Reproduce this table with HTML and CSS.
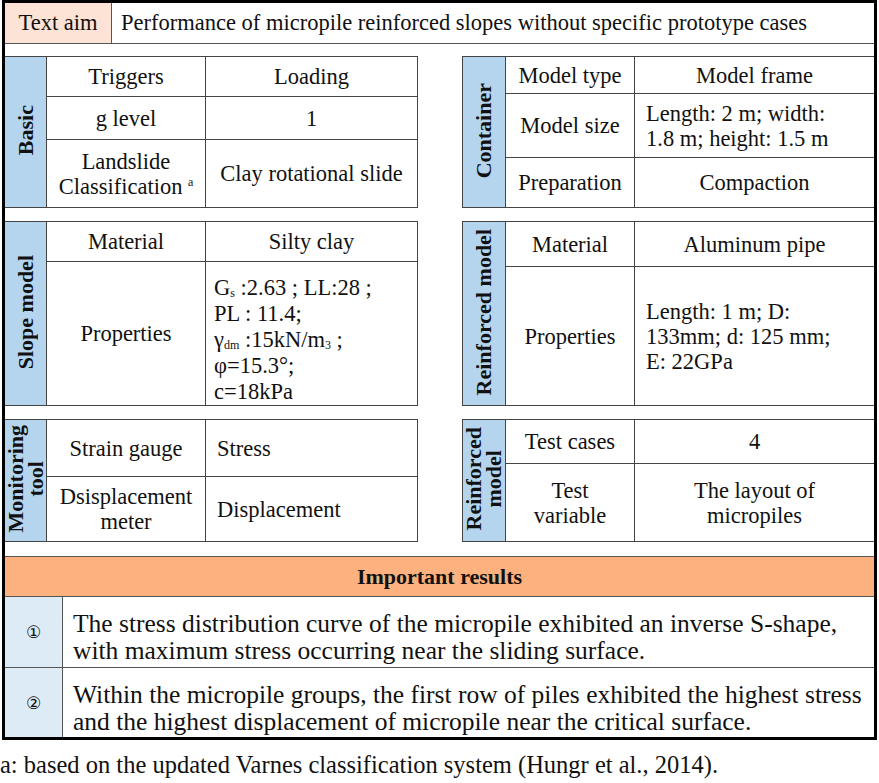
FILE: index.html
```html
<!DOCTYPE html>
<html lang="en">
<head>
    <meta charset="UTF-8">
    <meta name="viewport" content="width=device-width, initial-scale=1.0">
    <title>Micropile reinforced slopes</title>
    <link rel="stylesheet" href="styles.css">
</head>
<body>

    <div class="frame">
        <!-- Text aim -->
        <div class="aim">
            <div class="aim-label">Text aim</div>
            <div class="aim-text">Performance of micropile reinforced slopes without specific prototype cases</div>
        </div>

        <!-- Basic / Container -->
        <div class="pair pair-a">
            <table class="info left">
                <tr class="h40">
                    <td class="side" rowspan="3"><span>Basic</span></td>
                    <td class="key">Triggers</td>
                    <td>Loading</td>
                </tr>
                <tr class="h43">
                    <td class="key">g level</td>
                    <td>1</td>
                </tr>
                <tr class="h68">
                    <td class="key">Landslide<br>Classification <sup>a</sup></td>
                    <td>Clay rotational slide</td>
                </tr>
            </table>
            <table class="info right">
                <tr class="h37">
                    <td class="side" rowspan="3"><span>Container</span></td>
                    <td class="key">Model type</td>
                    <td>Model frame</td>
                </tr>
                <tr class="h64">
                    <td class="key">Model size</td>
                    <td class="text">Length: 2 m; width:<br>1.8 m; height: 1.5 m</td>
                </tr>
                <tr class="h50">
                    <td class="key">Preparation</td>
                    <td>Compaction</td>
                </tr>
            </table>
        </div>

        <!-- Slope model / Reinforced model -->
        <div class="pair pair-b">
            <table class="info left">
                <tr class="h40">
                    <td class="side" rowspan="2"><span>Slope model</span></td>
                    <td class="key">Material</td>
                    <td>Silty clay</td>
                </tr>
                <tr class="h144">
                    <td class="key">Properties</td>
                    <td class="text props">G<sub>s</sub> :2.63 ; LL:28 ;<br>PL : 11.4;<br>γ<sub>dm</sub> :15kN/m<sub>3</sub> ;<br>φ=15.3°;<br>c=18kPa</td>
                </tr>
            </table>
            <table class="info right">
                <tr class="h45">
                    <td class="side" rowspan="2"><span>Reinforced model</span></td>
                    <td class="key">Material</td>
                    <td>Aluminum pipe</td>
                </tr>
                <tr class="h139">
                    <td class="key">Properties</td>
                    <td class="text">Length: 1 m; D:<br>133mm; d: 125 mm;<br>E: 22GPa</td>
                </tr>
            </table>
        </div>

        <!-- Monitoring tool / Reinforced model -->
        <div class="pair pair-c">
            <table class="info left">
                <tr class="h57">
                    <td class="side" rowspan="2"><span>Monitoring<br>tool</span></td>
                    <td class="key">Strain gauge</td>
                    <td class="text">Stress</td>
                </tr>
                <tr class="h65">
                    <td class="key">Dsisplacement<br>meter</td>
                    <td class="text">Displacement</td>
                </tr>
            </table>
            <table class="info right">
                <tr class="h44">
                    <td class="side" rowspan="2"><span>Reinforced<br>model</span></td>
                    <td class="key">Test cases</td>
                    <td>4</td>
                </tr>
                <tr class="h78">
                    <td class="key">Test<br>variable</td>
                    <td>The layout of<br>micropiles</td>
                </tr>
            </table>
        </div>

        <!-- Important results -->
        <div class="results">
            <div class="results-title">Important results</div>
            <div class="result-row">
                <div class="result-num">①</div>
                <div class="result-text">The stress distribution curve of the micropile exhibited an inverse S-shape, with maximum stress occurring near the sliding surface.</div>
            </div>
            <div class="result-row">
                <div class="result-num">②</div>
                <div class="result-text">Within the micropile groups, the first row of piles exhibited the highest stress and the highest displacement of micropile near the critical surface.</div>
            </div>
        </div>
    </div>

    <p class="note">a: based on the updated Varnes classification system (Hungr et al., 2014).</p>

</body>
</html>
```

FILE: styles.css
```css
body {
    font-family: "Liberation Serif", "Times New Roman", serif;
    font-size: 22.5px;
    color: #111;
    background-color: #ffffff;
    margin: 0;
    padding: 0 0 0 2px;
}

.frame {
    width: 875px;
    box-sizing: border-box;
    border: 3px solid #000;
}

/* Text aim */
.aim {
    display: flex;
    height: 41px;
    border-bottom: 1px solid #555;
    box-sizing: border-box;
}

.aim-label {
    width: 106px;
    background-color: #fce3d5;
    border-right: 1px solid #555;
    display: flex;
    align-items: center;
    justify-content: center;
}

.aim-text {
    flex: 1;
    display: flex;
    align-items: center;
    padding-left: 9px;
}

/* Table pairs */
.pair {
    display: flex;
    justify-content: space-between;
}

.pair-a {
    margin-top: 12px;
}

.pair-b,
.pair-c {
    margin-top: 13px;
}

.info {
    border-collapse: collapse;
}

.info.left {
    width: 413px;
}

.info.right {
    width: 412px;
}

.info td {
    border: 1px solid #444;
    padding: 0;
    text-align: center;
    line-height: 25px;
}

.info.left td.side {
    border-left: none;
}

.info.right tr td:last-child {
    border-right: none;
}

.info.left td.side { width: 41px; }
.info.left td.key { width: 158px; }
.info.right td.side { width: 42px; }
.info.right td.key { width: 128px; }

.info td.side {
    background-color: #b5d5ee;
    font-weight: bold;
    font-size: 22px;
    line-height: 20px;
}

.info td.side span {
    display: inline-block;
    writing-mode: vertical-rl;
    transform: rotate(180deg);
    white-space: nowrap;
}

.info td.text {
    text-align: left;
    padding-left: 11px;
}

.info td.props {
    line-height: 26px;
    padding: 12px 0 0 8px;
}

.info sub,
.info sup {
    font-size: 12px;
    line-height: 0;
}

.info sub {
    vertical-align: -2px;
}

.h37 { height: 37px; }
.h40 { height: 40px; }
.h43 { height: 43px; }
.h44 { height: 44px; }
.h45 { height: 45px; }
.h50 { height: 50px; }
.h57 { height: 57px; }
.h64 { height: 64px; }
.h65 { height: 65px; }
.h68 { height: 68px; }
.h78 { height: 78px; }
.h139 { height: 139px; }
.h144 { height: 144px; }

/* Results */
.results {
    margin-top: 14px;
}

.results-title {
    height: 41px;
    background-color: #fcb17e;
    border-top: 1px solid #555;
    border-bottom: 1px solid #555;
    box-sizing: border-box;
    display: flex;
    align-items: center;
    justify-content: center;
    font-weight: bold;
    font-size: 22px;
}

.result-row {
    display: flex;
    height: 70px;
}

.result-row + .result-row {
    border-top: 1px solid #555;
    height: 69px;
}

.result-num {
    width: 57px;
    background-color: #ddebf7;
    border-right: 1px solid #555;
    display: flex;
    align-items: center;
    justify-content: center;
    font-family: "DejaVu Sans", sans-serif;
    font-size: 17px;
}

.result-text {
    flex: 1;
    display: flex;
    align-items: center;
    padding: 10px 6px 0 10px;
    font-size: 25.5px;
    line-height: 27px;
}

.note {
    margin: 11px 0 0 -2px;
    font-size: 24.5px;
}
```
